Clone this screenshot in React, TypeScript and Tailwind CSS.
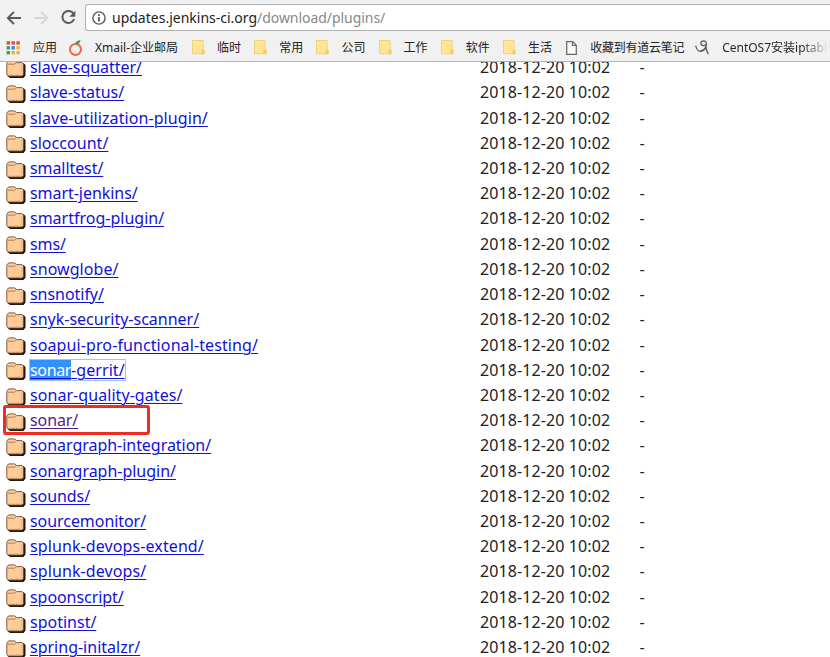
type Row = { name: string; tracking?: string };

const rows: Row[] = [
  { name: 'slave-squatter/', tracking: 'tracking-[-0.04px]' },
  { name: 'slave-status/', tracking: 'tracking-[-0.05px]' },
  { name: 'slave-utilization-plugin/', tracking: 'tracking-[0.08px]' },
  { name: 'sloccount/', tracking: 'tracking-[0.04px]' },
  { name: 'smalltest/', tracking: 'tracking-[-0.08px]' },
  { name: 'smart-jenkins/', tracking: 'tracking-[-0.05px]' },
  { name: 'smartfrog-plugin/' },
  { name: 'sms/', tracking: 'tracking-[-0.1px]' },
  { name: 'snowglobe/', tracking: 'tracking-[0.05px]' },
  { name: 'snsnotify/', tracking: 'tracking-[-0.04px]' },
  { name: 'snyk-security-scanner/' },
  { name: 'soapui-pro-functional-testing/', tracking: 'tracking-[0.1px]' },
  { name: 'sonar-gerrit/' },
  { name: 'sonar-quality-gates/', tracking: 'tracking-[0.06px]' },
  { name: 'sonar/', tracking: 'tracking-[-0.1px]' },
  { name: 'sonargraph-integration/', tracking: 'tracking-[-0.04px]' },
  { name: 'sonargraph-plugin/', tracking: 'tracking-[-0.02px]' },
  { name: 'sounds/', tracking: 'tracking-[-0.08px]' },
  { name: 'sourcemonitor/', tracking: 'tracking-[-0.06px]' },
  { name: 'splunk-devops-extend/', tracking: 'tracking-[0.1px]' },
  { name: 'splunk-devops/', tracking: 'tracking-[0.1px]' },
  { name: 'spoonscript/', tracking: 'tracking-[-0.06px]' },
  { name: 'spotinst/' },
  { name: 'spring-initalzr/' },
];

const folders = ['临时', '常用', '公司', '工作', '软件', '生活'];

function FolderIcon() {
  return (
    <svg width="20" height="18" viewBox="0 0 20 18" className="shrink-0">
      <path d="M2 3h15.5L19.5 5v10.5L17.5 18H4L1.5 16z" fill="#22190f" />
      <path d="M.8 3.2 2.6.9h6.2l1.7 1.7h5.7l1.2 1.2v11L16 16H2.4L.8 14.4z" fill="#ffcc99" stroke="#6b4f35" strokeWidth=".9" />
      <path d="M2 4.2h6.6l1.9-1.6" fill="none" stroke="#a8784c" strokeWidth=".9" />
      <path d="M15.7 5v10M4 14.9h12" stroke="#d09a68" strokeWidth=".8" strokeDasharray="1 1" />
    </svg>
  );
}

function BookmarkFolder() {
  return (
    <svg width="13" height="15" viewBox="0 0 13 15" className="shrink-0">
      <path d="M.5.5h10.6v9l.9 1v3.2H.5z" fill="#ffe594" stroke="#eed27e" />
      <path d="M9.8 13.8v-3.4l1.2-1 1.2 1v3.4z" fill="#f6d466" stroke="#e9c65c" strokeWidth=".6" />
    </svg>
  );
}

function AppsIcon() {
  const colors = ['#e34b43', '#e34b43', '#e34b43', '#37a260', '#3d82e9', '#efb52e', '#37a260', '#efb52e', '#efb52e'];
  return (
    <svg width="14" height="14" viewBox="0 0 14 14" className="shrink-0">
      {colors.map((c, i) => (
        <rect key={i} x={0.6 + (i % 3) * 4.9} y={0.2 + Math.floor(i / 3) * 4.9} width="3.4" height="3.4" fill={c} />
      ))}
    </svg>
  );
}

function Name({ name, tracking = '' }: Row) {
  if (name === 'sonar-gerrit/')
    return (
      <a className="block h-[20px] leading-[20px] tracking-[0.07px] text-[#1111d8] underline decoration-1 underline-offset-2 outline outline-1 outline-[#9dc4f8]">
        <span className="inline-block h-[20px] bg-[#3390ff] tracking-[-0.35px] text-white underline decoration-[#1111d8] decoration-1 underline-offset-2">sonar</span>-gerrit/
      </a>
    );
  const color = name === 'sonar/' ? 'text-[#551a8b]' : 'text-[#1111d8]';
  return <a className={`underline decoration-1 underline-offset-2 ${color} ${tracking}`}>{name}</a>;
}

export default function App() {
  return (
    <div className="flex h-[657px] w-[830px] flex-col overflow-hidden bg-white font-['Noto_Sans','Noto_Sans_CJK_SC',sans-serif] text-[#222]">
      <header className="h-[62px] shrink-0 border-b border-[#b4b4b4] bg-[#f1f1f1]">
        <div className="flex h-[31px] pt-1">
          <div className="flex h-[27px] w-[85px] shrink-0 items-center pl-[6px]">
            <svg width="15" height="14" viewBox="0 0 15 14" fill="none" stroke="#5a5a5a" strokeWidth="2">
              <path d="M15 7H2M8 .9 1.9 7 8 13.1" />
            </svg>
            <svg width="15" height="14" viewBox="0 0 15 14" fill="none" stroke="#d6d6d6" strokeWidth="2" className="ml-[13px]">
              <path d="M0 7h13M7 .9 13.1 7 7 13.1" />
            </svg>
            <svg width="15" height="15" viewBox="0 0 15 15" className="ml-[12px]">
              <path d="M12.3 3.4A6 6 0 1 0 13.1 9" fill="none" stroke="#5a5a5a" strokeWidth="2" />
              <path d="M14.3.8v6H8.3z" fill="#5a5a5a" />
            </svg>
          </div>
          <div className="flex h-[27px] flex-1 items-center rounded-l-[3px] border border-r-0 border-[#b2b2b2] bg-white pl-[6px] text-[14px] leading-5">
            <svg width="14" height="14" viewBox="0 0 14 14" className="mr-[6px]">
              <circle cx="7" cy="7" r="6.1" fill="none" stroke="#5a5a5a" strokeWidth="1.4" />
              <path d="M7 6v4.6M7 3.2v1.8" stroke="#5a5a5a" strokeWidth="1.8" />
            </svg>
            <span>updates.jenkins-ci.org</span>
            <span className="tracking-[-0.05px] text-[#888]">/download/plugins/</span>
          </div>
        </div>
        <div className="flex h-[33px] items-center whitespace-nowrap text-[12px] leading-4">
          <div className="flex w-[62px] shrink-0 items-center pl-[6px]"><AppsIcon /><span className="ml-[13px]">应用</span></div>
          <div className="flex w-[129px] shrink-0 items-center pl-[6px]">
            <svg width="15" height="16" viewBox="0 0 15 16" className="shrink-0">
              <circle cx="7.5" cy="9.4" r="5.5" fill="none" stroke="#e86d48" strokeWidth="2" />
              <path d="M7 4.6C7.5 1.5 9.5.3 12.5.3 12.3 3 10.4 4.6 7 4.6z" fill="#4f9955" />
            </svg>
            <span className="ml-[12px]">Xmail-企业邮局</span>
          </div>
          {folders.map((f) => (
            <div key={f} className="flex w-[62.2px] shrink-0 items-center pl-px"><BookmarkFolder /><span className="ml-[12px]">{f}</span></div>
          ))}
          <div className="flex w-[131px] shrink-0 items-center pl-[2px]">
            <svg width="11" height="14" viewBox="0 0 11 14" className="shrink-0"><path d="M.7.7h6l3.6 3.6v9H.7zM6.5.7v3.8h3.8" fill="#fafafa" stroke="#666" strokeWidth="1.2" /></svg>
            <span className="ml-[13px] tracking-[-0.25px]">收藏到有道云笔记</span>
          </div>
          <svg width="15" height="15" viewBox="0 0 15 15" className="shrink-0" fill="none" stroke="#5a5a5a" strokeWidth="1.3">
            <path d="M.6 5.6C1.5 9 3 11.3 5.2 11.3c3.2 0 6.2-3.6 6.2-7.3C11.4 2 10.2.8 8.6.8 7 .8 6 2 6 3.3c0 1.5 1 2.3 2.3 2.3 1.4 0 2.5-.7 3-1.6" />
            <path d="M5.2 11.3c2-.5 4.8-1.8 6-3.3.3 2.5 1 4.5 2.2 6.2" />
          </svg>
          <span className="ml-[12px] bg-linear-to-r from-[#222] from-75% to-[#e5e5e5] bg-clip-text text-transparent">CentOS7安装iptabl</span>
        </div>
      </header>
      <main className="min-h-0 flex-1 overflow-hidden">
        <div className="-mt-[7px]">
          {rows.map((row) => (
            <div key={row.name} className="relative flex h-[25.22px] items-center whitespace-nowrap text-[16px] leading-[21px]">
              <div className="flex h-full w-[30px] shrink-0 items-end pb-[2.4px] pl-[6.4px]"><FolderIcon /></div>
              <div className="w-[450px] shrink-0"><span className="inline-block"><Name {...row} /></span></div>
              <span className="w-[159.5px] tracking-[0.1px]">2018-12-20 10:02</span><span>-</span>
              {row.name === 'sonar/' && <div className="absolute -top-[3px] left-[3px] h-[30px] w-[147px] rounded-[3px] border-3 border-[#ed2e24]" />}
            </div>
          ))}
        </div>
      </main>
    </div>
  );
}
